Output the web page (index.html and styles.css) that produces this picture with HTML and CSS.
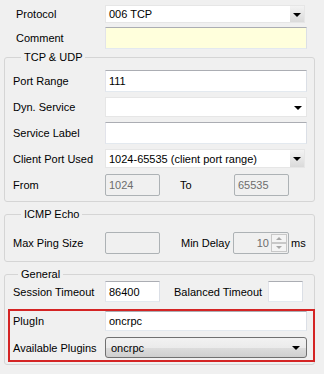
FILE: index.html
```html
<!DOCTYPE html>
<html>
<head>
<meta charset="utf-8">
<link rel="stylesheet" href="styles.css">
</head>
<body>
<div class="panel">
  <div class="top">
    <div class="row r-protocol">
      <span class="lbl">Protocol</span>
      <div class="combo w200 h18"><span class="val">006 TCP</span><span class="btn"><i class="arrow"></i></span></div>
    </div>
    <div class="row r-comment">
      <span class="lbl">Comment</span>
      <div class="edit yellow w202 h22"></div>
    </div>
  </div>

  <fieldset class="group g-tcp">
    <legend>TCP &amp; UDP</legend>
    <div class="row r-port">
      <span class="lbl">Port Range</span>
      <div class="edit w202 h22"><span class="val">111</span></div>
    </div>
    <div class="row r-dyn">
      <span class="lbl">Dyn. Service</span>
      <div class="combo plain w202 h20"><span class="val"></span><span class="btn flat"><i class="arrow"></i></span></div>
    </div>
    <div class="row r-svc">
      <span class="lbl">Service Label</span>
      <div class="edit w202 h22"></div>
    </div>
    <div class="row r-client">
      <span class="lbl">Client Port Used</span>
      <div class="combo w200 h19"><span class="val">1024-65535 (client port range)</span><span class="btn"><i class="arrow"></i></span></div>
    </div>
    <div class="row r-from">
      <span class="lbl">From</span>
      <div class="edit disabled w55 h22"><span class="val">1024</span></div>
      <span class="lbl2 to">To</span>
      <div class="edit disabled w55 h22"><span class="val">65535</span></div>
    </div>
  </fieldset>

  <fieldset class="group g-icmp">
    <legend>ICMP Echo</legend>
    <div class="row r-ping">
      <span class="lbl">Max Ping Size</span>
      <div class="edit disabled w55 h22"></div>
      <span class="lbl2 mindelay">Min Delay</span>
      <div class="spin disabled">
        <span class="val">10</span>
        <span class="spinbtns"><span class="sb"><i class="up"></i></span><span class="sb"><i class="down"></i></span></span>
      </div>
      <span class="ms">ms</span>
    </div>
  </fieldset>

  <fieldset class="group g-general">
    <legend>General</legend>
    <div class="row r-session">
      <span class="lbl">Session Timeout</span>
      <div class="edit w55 h21"><span class="val">86400</span></div>
      <span class="lbl2 balanced">Balanced Timeout</span>
      <div class="edit w35 h21"></div>
    </div>
    <div class="highlight">
      <div class="row r-plugin">
        <span class="lbl">PlugIn</span>
        <div class="edit w202 h20"><span class="val">oncrpc</span></div>
      </div>
      <div class="row r-avail">
        <span class="lbl">Available Plugins</span>
        <div class="dropbtn"><span class="val">oncrpc</span><i class="arrow"></i></div>
      </div>
    </div>
  </fieldset>
</div>
</body>
</html>
```
FILE: styles.css
```css
* { box-sizing: border-box; }
html, body { margin: 0; padding: 0; }
body {
  background: #f0f0f0;
  font-family: "Liberation Sans", Arial, sans-serif;
  font-size: 11px;
  color: #000;
  width: 324px;
  height: 374px;
  overflow: hidden;
}
.panel { padding: 0; }

.top { padding-left: 16px; padding-top: 5px; }
.row { display: flex; align-items: center; }
.top .lbl { width: 89px; }
.lbl { flex: none; white-space: nowrap; }
.group .lbl { width: 92px; }

.r-comment { margin-top: 4px; }

.w200 { width: 200px; }
.w202 { width: 202px; }
.w55 { width: 55px; }
.w35 { width: 35px; }
.h18 { height: 18px; }
.h19 { height: 19px; }
.h20 { height: 20px; }
.h21 { height: 21px; }
.h22 { height: 22px; }

.edit {
  flex: none;
  background: #fff;
  border: 1px solid;
  border-color: #abadb3 #dbdfe6 #e3e9ef #e2e3ea;
  display: flex;
  align-items: center;
  padding-left: 3px;
}
.edit.yellow { background: #ffffdc; }
.edit.disabled {
  background: #f0f0f0;
  border-color: #adb2b5;
  border-radius: 2px;
  color: #6d6d6d;
}

.combo {
  flex: none;
  background: #fff;
  border: 1px solid #e6e6e6;
  display: flex;
  align-items: stretch;
}
.combo .val { flex: 1; display: flex; align-items: center; padding-left: 3px; white-space: nowrap; overflow: hidden; }
.combo .btn {
  width: 14px;
  flex: none;
  background: linear-gradient(#f3f3f3, #dadada);
  display: flex;
  align-items: center;
  justify-content: center;
}
.combo .btn.flat { background: #fff; width: 16px; }
.arrow {
  display: block;
  width: 0; height: 0;
  border-left: 4px solid transparent;
  border-right: 4px solid transparent;
  border-top: 4px solid #000;
  margin-top: 1px;
}

.group {
  margin: 0 0 0 4px;
  width: 311px;
  border: 1px solid #d5d5d5;
  border-radius: 3px;
  padding: 0 0 0 8px;
  min-width: 0;
}
.group legend {
  padding: 0 3px;
  margin-left: 8px;
  line-height: 13px;
  height: 13px;
}
.g-general legend { margin-left: 5px; }

.g-tcp { margin-top: 2px; padding-bottom: 5px; }
.r-port { margin-top: 6px; }
.r-dyn { margin-top: 5px; }
.r-svc { margin-top: 5px; }
.r-client { margin-top: 5px; }
.r-from { margin-top: 6px; }
.lbl2 { flex: none; white-space: nowrap; }
.to { margin-left: 20px; width: 54px; }

.g-icmp { margin-top: 6px; padding-bottom: 7px; }
.r-ping { margin-top: 11px; }
.mindelay { margin-left: 21px; width: 52px; }
.spin {
  flex: none;
  width: 56px; height: 22px;
  border: 1px solid #adb2b5;
  border-radius: 2px;
  display: flex;
  color: #6d6d6d;
}
.spin .val { flex: 1; text-align: right; padding-right: 2px; display: flex; align-items: center; justify-content: flex-end; }
.spinbtns { width: 17px; display: flex; flex-direction: column; padding: 1px 1px 1px 0; gap: 0; }
.sb {
  flex: 1;
  border: 1px solid #c8c8c8;
  background: #f4f4f4;
  display: flex; align-items: center; justify-content: center;
}
.up, .down { display: block; width: 0; height: 0; border-left: 3px solid transparent; border-right: 3px solid transparent; }
.up { border-bottom: 3px solid #a8a8a8; }
.down { border-top: 3px solid #a8a8a8; }
.ms { margin-left: 2px; }

.g-general { margin-top: 6px; padding-bottom: 2px; }
.r-session { margin-top: 0; }
.balanced { margin-left: 14px; width: 94px; }

.highlight {
  margin: 7px -1px 0 -5px;
  border: 2px solid #d42424;
  padding: 0 0 2px 3px;
}
.highlight .lbl { width: 92px; }
.r-plugin { margin-top: 0; }
.r-avail { margin-top: 6px; }
.dropbtn {
  flex: none;
  width: 202px; height: 21px;
  border: 1px solid #707070;
  border-radius: 3px;
  background: linear-gradient(#f2f2f2 0%, #ebebeb 50%, #dddddd 51%, #cfcfcf 100%);
  display: flex; align-items: center;
  padding: 0 6px 0 5px;
}
.dropbtn .val { flex: 1; }
```
